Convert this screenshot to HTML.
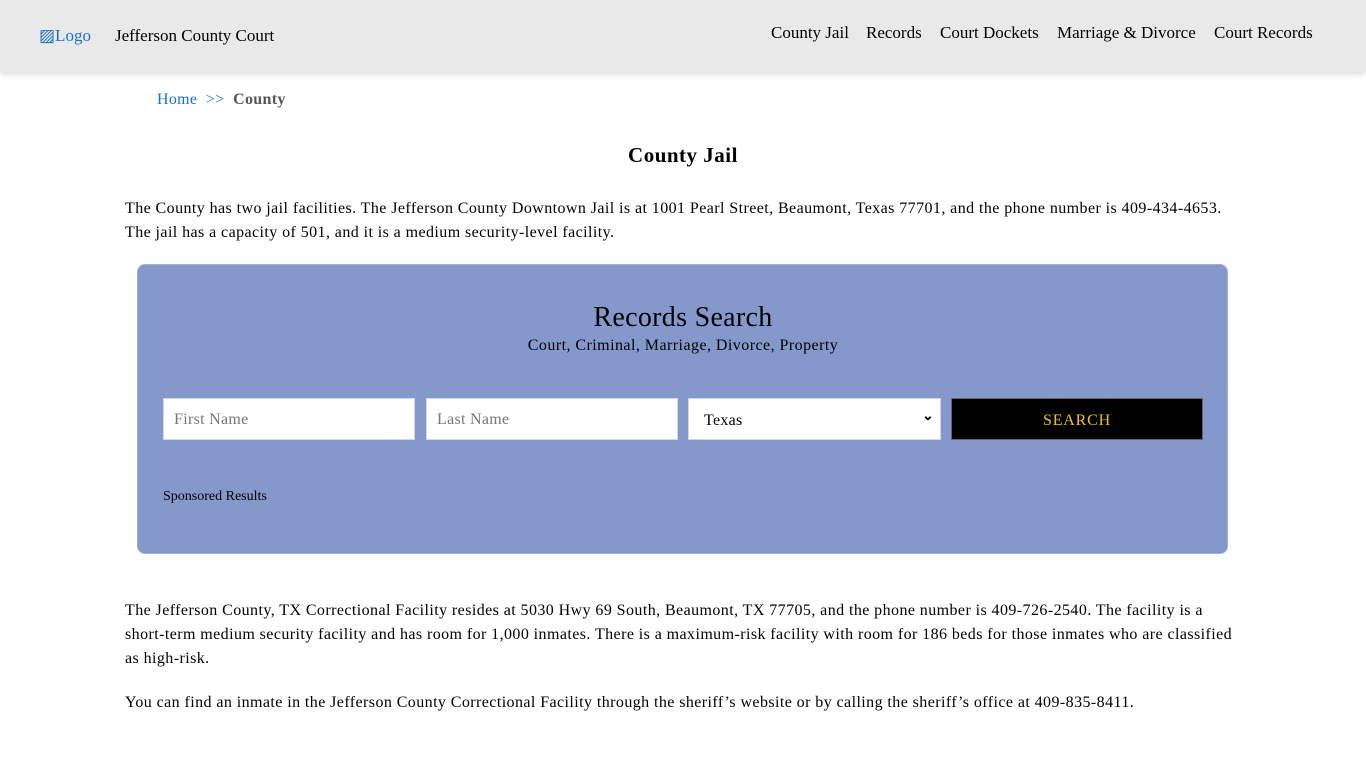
<!DOCTYPE html>
<html><head><meta charset="utf-8"><style>
body{margin:0;width:1366px;height:768px;overflow:hidden;background:#fff;font-family:"Liberation Serif",serif;position:relative;color:#000}
.hdr{position:absolute;left:0;top:0;width:1366px;height:72px;background:#e9e9e9;box-shadow:0 2px 6px rgba(0,0,0,.15)}
.a{position:absolute;white-space:nowrap}
.nav{font-size:17px;top:23px}
p{margin:0}
.txt{position:absolute;left:125px;width:1110px;font-size:16px;line-height:24px;letter-spacing:0.42px}
.box{position:absolute;left:137px;top:264px;width:1091px;height:290px;background:#8598cc;border-radius:8px;border:1px solid #9fb0d8;box-sizing:border-box}
.in{position:absolute;top:398px;height:42px;background:#fff;border:1px solid #cfd8e8;box-sizing:border-box;font-size:16px;color:#777;padding:11px 10px;line-height:18px;letter-spacing:0.3px}
</style></head><body>
<div class="hdr"></div>
<div class="a" style="left:39px;top:26px;font-size:17px;color:#1a6fd6">▨Logo</div>
<div class="a" style="left:115px;top:26px;font-size:17px">Jefferson County Court</div>
<div class="a nav" style="left:771px">County Jail</div>
<div class="a nav" style="left:866px">Records</div>
<div class="a nav" style="left:940px">Court Dockets</div>
<div class="a nav" style="left:1057px">Marriage &amp; Divorce</div>
<div class="a nav" style="left:1214px">Court Records</div>
<div class="a" style="left:157px;top:91px;font-size:16px;color:#1a6fd6;letter-spacing:0.3px">Home &nbsp;&gt;&gt; &nbsp;<b style="color:#555">County</b></div>
<div class="a" style="left:0;width:1366px;text-align:center;top:143px;font-size:21px;font-weight:bold;letter-spacing:0.5px">County Jail</div>
<div class="txt" style="top:197px">The County has two jail facilities. The Jefferson County Downtown Jail is at 1001 Pearl Street, Beaumont, Texas 77701, and the phone number is 409-434-4653. The jail has a capacity of 501, and it is a medium security-level facility.</div>
<div class="box"></div>
<div class="a" style="left:0;width:1366px;text-align:center;top:302px;font-size:28px;letter-spacing:0.3px">Records Search</div>
<div class="a" style="left:0;width:1366px;text-align:center;top:337px;font-size:16px;letter-spacing:0.45px">Court, Criminal, Marriage, Divorce, Property</div>
<div class="in" style="left:163px;width:252px;padding-top:12px">First Name</div>
<div class="in" style="left:426px;width:252px;padding-top:12px">Last Name</div>
<div class="in" style="left:688px;width:253px;color:#000;padding-left:15px;padding-top:13px">Texas<span style="position:absolute;right:6px;top:9px;font-size:14px;font-weight:bold">⌄</span></div>
<div class="in" style="left:951px;width:252px;background:#000;border-color:#666;color:#f0c020;text-align:center;font-size:16px;letter-spacing:.8px;padding-top:13px">SEARCH</div>
<div class="a" style="left:163px;top:489px;font-size:14px">Sponsored Results</div>
<div class="txt" style="top:599px">The Jefferson County, TX Correctional Facility resides at 5030 Hwy 69 South, Beaumont, TX 77705, and the phone number is 409-726-2540. The facility is a short-term medium security facility and has room for 1,000 inmates. There is a maximum-risk facility with room for 186 beds for those inmates who are classified as high-risk.</div>
<div class="txt" style="top:691px">You can find an inmate in the Jefferson County Correctional Facility through the sheriff’s website or by calling the sheriff’s office at 409-835-8411.</div>
</body></html>
